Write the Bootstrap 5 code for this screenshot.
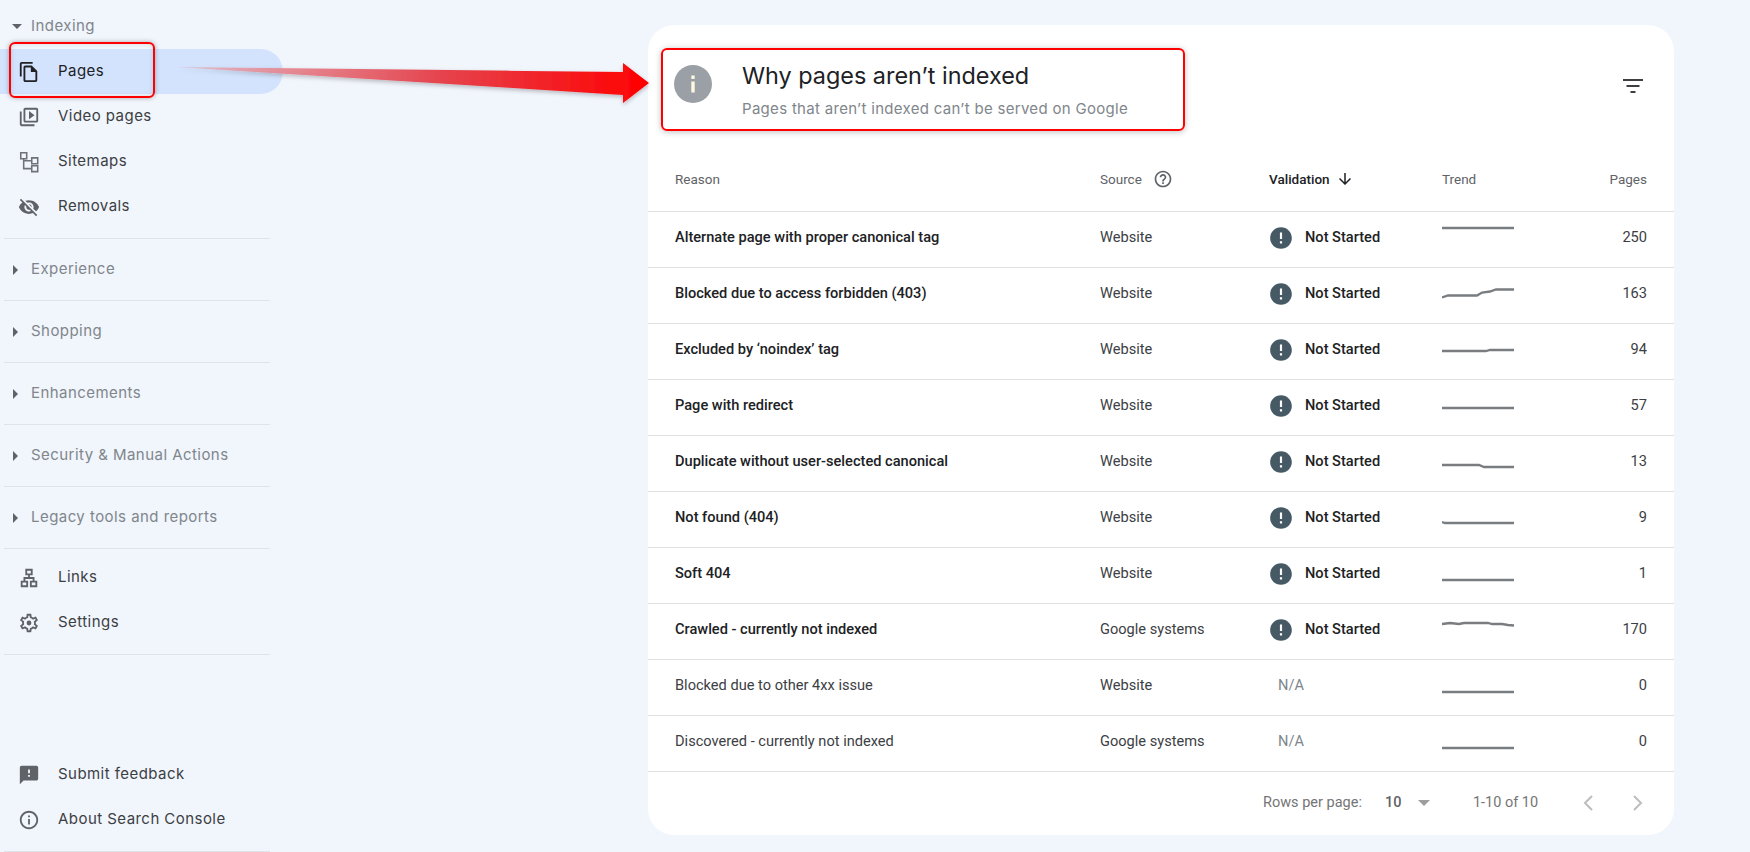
<!DOCTYPE html>
<html lang="en">
<head>
    <meta charset="UTF-8">
    <meta name="viewport" content="width=device-width, initial-scale=1.0">
    <title>Why pages aren't indexed</title>
    <link href="https://cdn.jsdelivr.net/npm/bootstrap@5.3.0/dist/css/bootstrap.min.css" rel="stylesheet">
    <style>
        body { background: #f1f5fc; font-family: Roboto, "Liberation Sans", sans-serif; height: 852px; overflow: hidden; }
        .side-nav { width: 283px; height: 852px; padding-top: 4px; font-family: Inter, Roboto, sans-serif; font-size: 15px; letter-spacing: .45px; color: #3c4043; }
        .side-item { height: 45px; padding-left: 18px; gap: 18px; position: relative; }
        .side-item svg { width: 22px; height: 22px; fill: #5f6368; flex: none; }
        .side-item svg.stroked { fill: none; stroke: #6f7377; stroke-width: 1.7; }
        .side-item.on { background: #d3e3fd; border-radius: 0 23px 23px 0; color: #202124; }
        .side-item.on svg { fill: #202124; }
        .side-item.on::after { content: ""; position: absolute; left: 9px; top: -7px; width: 146px; height: 56px; border: 2px solid #f00; border-radius: 6px; box-shadow: 0 0 5px rgba(0,0,0,.3), inset 0 0 5px rgba(0,0,0,.12); }
        .side-head { height: 45px; color: #80868b; padding-left: 12px; gap: 9px; }
        .side-sec { height: 61px; gap: 8px; }
        .caret-down { border-left: 5px solid transparent; border-right: 5px solid transparent; border-top: 5px solid #5f6368; }
        .caret-right { border-top: 5px solid transparent; border-bottom: 5px solid transparent; border-left: 5px solid #5f6368; margin-right: 5px; margin-left: 1px; }
        .side-rule { width: 266px; margin-left: 4px; border-bottom: 1px solid #e0e3e7; }
        .rule-top { margin-top: 9px; }
        .side-links { margin-top: 6px; }
        .page-main { padding: 25px 76px 17px 365px; }
        .report { width: 1026px; height: 810px; background: #fff; border-radius: 26px; }
        .report-top { padding: 23px 31px 0 13px; height: 122px; }
        .why-box { width: 524px; height: 83px; border: 2px solid #f00; border-radius: 6px; padding-left: 11px; box-shadow: 0 1px 6px rgba(0,0,0,.25); }
        .why-icon { width: 38px; height: 38px; flex: none; margin-right: 30px; margin-top: -12px; }
        .why-title { font-size: 23.400px; line-height: 30px; color: #202124; font-family: Inter, Roboto, sans-serif; font-weight: 400; margin: 0 0 8px; }
        .why-sub { font-size: 15px; letter-spacing: .3px; line-height: 20px; color: #80868b; font-family: Inter, Roboto, sans-serif; }
        .filter-icon { width: 20px; height: 14px; margin-top: 31px; }
        .why-table { table-layout: fixed; margin: 0; font-size: 14.600px; color: #3c4043; --bs-table-color: #3c4043; --bs-table-border-color: #e0e0e0; }
        .col-reason { width: 452px; }
        .col-source { width: 169px; }
        .col-valid { width: 173px; }
        .col-trend { width: 101px; }
        .col-pages { width: 131px; }
        .why-table th { height: 64px; font-size: 13.500px; font-weight: 400; color: #5f6368; padding: 0; vertical-align: middle; }
        .why-table td { height: 56px; padding: 0 0 3px; vertical-align: middle; }
        .why-table td.trend-cell { padding: 0; }
        .why-table .c1 { padding-left: 27px; }
        .why-table .cn { padding-right: 27px; text-align: right; }
        .why-table th.sorted { color: #202124; font-weight: 500; }
        .strong-row .c1, .status { font-weight: 500; color: #202124; }
        .status svg { width: 26px; height: 26px; fill: #455a64; margin-left: -1px; margin-right: 11px; flex: none; }
        .na { color: #80868b; padding-left: 9px; }
        .trend { width: 72px; height: 55px; display: block; fill: none; stroke: #7a7d80; stroke-width: 2.300; }
        .help-icon { width: 20px; height: 20px; fill: #5f6368; margin-left: 11px; }
        .sort-icon { width: 18px; height: 18px; fill: #202124; margin-left: 6px; }
        .pager { height: 62px; padding-left: 615px; font-size: 14.500px; color: #757575; }
        .pager-count { color: #5f6368; font-weight: 500; margin-left: 23px; width: 33px; }
        .pager-arrow { border-left: 6.500px solid transparent; border-right: 6.500px solid transparent; border-top: 6.500px solid #9e9e9e; }
        .pager-range { margin-left: 43px; width: 88px; }
        .pager-nav { width: 12px; height: 18px; fill: none; stroke: #bdbdbd; stroke-width: 2; margin-left: 21px; }
        .pager-nav + .pager-nav { margin-left: 38px; }
        .red-arrow { position: absolute; left: 0; top: 0; width: 700px; height: 130px; pointer-events: none; }
    </style>
</head>
<body>
    <svg class="d-none">
        <symbol id="err" viewBox="0 0 24 24"><path d="M12 2C6.48 2 2 6.48 2 12s4.48 10 10 10 10-4.48 10-10S17.52 2 12 2zm1 15h-2v-2h2v2zm0-4h-2V7h2v6z"/></symbol>
    </svg>

    <div class="d-flex">
        <nav class="side-nav d-flex flex-column flex-shrink-0">
            <div class="side-head d-flex align-items-center"><span class="caret-down"></span>Indexing</div>
            <div class="side-item on d-flex align-items-center">
                <svg viewBox="0 0 24 24"><path d="M16 1H4c-1.1 0-2 .9-2 2v14h2V3h12V1zm-1 4H8c-1.1 0-1.99.9-1.99 2L6 21c0 1.1.89 2 1.99 2H19c1.1 0 2-.9 2-2V11l-6-6zM8 21V7h6v5h5v9H8z"/></svg>Pages
            </div>
            <div class="side-item d-flex align-items-center">
                <svg viewBox="0 0 24 24"><path d="M4 6H2v14c0 1.1.9 2 2 2h14v-2H4V6zm16-4H8c-1.1 0-2 .9-2 2v12c0 1.1.9 2 2 2h12c1.1 0 2-.9 2-2V4c0-1.1-.9-2-2-2zm0 14H8V4h12v12zM12 5.500v9l6-4.500z"/></svg>Video pages
            </div>
            <div class="side-item d-flex align-items-center">
                <svg class="stroked" viewBox="0 0 24 24"><path d="M3 2h6.500v6.500H3zM15 7.500h6.500V14H15zM15 16h6.500v6.500H15zM6.200 8.500V19.200H15M6.200 10.700H15"/></svg>Sitemaps
            </div>
            <div class="side-item d-flex align-items-center">
                <svg viewBox="0 0 24 24"><path d="M12 7c2.76 0 5 2.24 5 5 0 .65-.13 1.26-.36 1.83l2.92 2.92c1.51-1.26 2.7-2.89 3.43-4.75-1.73-4.39-6-7.5-11-7.5-1.4 0-2.74.25-3.98.7l2.16 2.16C10.74 7.13 11.35 7 12 7zM2 4.27l2.28 2.28.46.46C3.08 8.3 1.78 10.02 1 12c1.73 4.39 6 7.5 11 7.5 1.55 0 3.03-.3 4.38-.84l.42.42L19.73 22 21 20.73 3.27 3 2 4.27zM7.53 9.8l1.55 1.55c-.05.21-.08.43-.08.65 0 1.66 1.34 3 3 3 .22 0 .44-.03.65-.08l1.55 1.55c-.67.33-1.41.53-2.2.53-2.76 0-5-2.24-5-5 0-.79.2-1.53.53-2.2zm4.31-.78l3.15 3.15.02-.16c0-1.66-1.34-3-3-3l-.17.01z"/></svg>Removals
            </div>
            <div class="side-rule rule-top"></div>
            <div class="side-head side-sec d-flex align-items-center"><span class="caret-right"></span>Experience</div>
            <div class="side-rule"></div>
            <div class="side-head side-sec d-flex align-items-center"><span class="caret-right"></span>Shopping</div>
            <div class="side-rule"></div>
            <div class="side-head side-sec d-flex align-items-center"><span class="caret-right"></span>Enhancements</div>
            <div class="side-rule"></div>
            <div class="side-head side-sec d-flex align-items-center"><span class="caret-right"></span>Security &amp; Manual Actions</div>
            <div class="side-rule"></div>
            <div class="side-head side-sec d-flex align-items-center"><span class="caret-right"></span>Legacy tools and reports</div>
            <div class="side-rule"></div>
            <div class="side-item side-links d-flex align-items-center">
                <svg viewBox="0 0 24 24"><path d="M13 22h8v-7h-3v-4h-5V9h3V2H8v7h3v2H6v4H3v7h8v-7H8v-2h8v2h-3v7zM10 7V4h4v3h-4zM5 20v-3h4v3H5zm10 0v-3h4v3h-4z"/></svg>Links
            </div>
            <div class="side-item d-flex align-items-center">
                <svg viewBox="0 0 24 24"><path d="M19.43 12.98c.04-.32.07-.64.07-.98 0-.34-.03-.66-.07-.98l2.11-1.65c.19-.15.24-.42.12-.64l-2-3.46c-.09-.16-.26-.25-.44-.25-.06 0-.12.01-.17.03l-2.49 1c-.52-.4-1.08-.73-1.69-.98l-.38-2.65C14.46 2.18 14.25 2 14 2h-4c-.25 0-.46.18-.49.42l-.38 2.65c-.61.25-1.17.59-1.69.98l-2.49-1c-.06-.02-.12-.03-.18-.03-.17 0-.34.09-.43.25l-2 3.46c-.13.22-.07.49.12.64l2.11 1.65c-.04.32-.07.65-.07.98 0 .33.03.66.07.98l-2.11 1.65c-.19.15-.24.42-.12.64l2 3.46c.09.16.26.25.44.25.06 0 .12-.01.17-.03l2.49-1c.52.4 1.08.73 1.69.98l.38 2.65c.03.24.24.42.49.42h4c.25 0 .46-.18.49-.42l.38-2.65c.61-.25 1.17-.59 1.69-.98l2.49 1c.06.02.12.03.18.03.17 0 .34-.09.43-.25l2-3.46c.12-.22.07-.49-.12-.64l-2.11-1.65zm-1.98-1.71c.04.31.05.52.05.73 0 .21-.02.43-.05.73l-.14 1.13.89.7 1.08.84-.7 1.21-1.27-.51-1.04-.42-.9.68c-.43.32-.84.56-1.25.73l-1.06.43-.16 1.13-.2 1.35h-1.4l-.19-1.35-.16-1.13-1.06-.43c-.43-.18-.83-.41-1.23-.71l-.91-.7-1.06.43-1.27.51-.7-1.21 1.08-.84.89-.7-.14-1.13c-.03-.31-.05-.54-.05-.74s.02-.43.05-.73l.14-1.13-.89-.7-1.08-.84.7-1.21 1.27.51 1.04.42.9-.68c.43-.32.84-.56 1.25-.73l1.06-.43.16-1.13.2-1.35h1.39l.19 1.35.16 1.13 1.06.43c.43.18.83.41 1.23.71l.91.7 1.06-.43 1.27-.51.7 1.21-1.07.85-.89.7.14 1.13z"/><circle cx="12" cy="12" r="2.600"/></svg>Settings
            </div>
            <div class="side-rule rule-top"></div>
            <div class="side-item d-flex align-items-center mt-auto">
                <svg viewBox="0 0 24 24"><path d="M20 2H4c-1.1 0-1.99.9-1.99 2L2 22l4-4h14c1.1 0 2-.9 2-2V4c0-1.1-.9-2-2-2zm-7 12h-2v-2h2v2zm0-4h-2V6h2v4z"/></svg>Submit feedback
            </div>
            <div class="side-item d-flex align-items-center">
                <svg viewBox="0 0 24 24"><path d="M11 7h2v2h-2zm0 4h2v6h-2zm1-9C6.48 2 2 6.48 2 12s4.48 10 10 10 10-4.48 10-10S17.52 2 12 2zm0 18c-4.41 0-8-3.59-8-8s3.59-8 8-8 8 3.59 8 8-3.59 8-8 8z"/></svg>About Search Console
            </div>
            <div class="side-rule rule-top"></div>
        </nav>

        <main class="page-main">
            <section class="report">
                <div class="report-top d-flex justify-content-between align-items-start">
                    <div class="why-box d-flex align-items-center">
                        <svg class="why-icon" viewBox="0 0 38 38"><circle cx="19" cy="19" r="19" fill="#9aa0a6"/><rect x="17.300" y="16.500" width="3.400" height="11" fill="#fff8e1"/><rect x="17.300" y="10.500" width="3.400" height="3.400" fill="#fff8e1"/></svg>
                        <div>
                            <h1 class="why-title">Why pages aren’t indexed</h1>
                            <div class="why-sub">Pages that aren’t indexed can’t be served on Google</div>
                        </div>
                    </div>
                    <svg class="filter-icon" viewBox="0 0 20 14"><path d="M0 0h20v2H0zM3.500 6h13v2h-13zM7.500 12h5v2h-5z" fill="#3c4043"/></svg>
                </div>

                <table class="table why-table">
                    <colgroup><col class="col-reason"><col class="col-source"><col class="col-valid"><col class="col-trend"><col class="col-pages"></colgroup>
                    <thead>
                        <tr>
                            <th class="c1">Reason</th>
                            <th><span class="d-inline-flex align-items-center">Source<svg class="help-icon" viewBox="0 0 24 24"><path d="M11 18h2v-2h-2v2zm1-16C6.48 2 2 6.48 2 12s4.48 10 10 10 10-4.48 10-10S17.52 2 12 2zm0 18c-4.41 0-8-3.59-8-8s3.59-8 8-8 8 3.59 8 8-3.59 8-8 8zm0-14c-2.210 0-4 1.790-4 4h2c0-1.100.9-2 2-2s2 .9 2 2c0 2-3 1.750-3 5h2c0-2.250 3-2.500 3-5 0-2.210-1.790-4-4-4z"/></svg></span></th>
                            <th class="sorted"><span class="d-inline-flex align-items-center">Validation<svg class="sort-icon" viewBox="0 0 24 24"><path d="M20 12l-1.410-1.410L13 16.170V4h-2v12.170l-5.580-5.600L4 12l8 8 8-8z"/></svg></span></th>
                            <th>Trend</th>
                            <th class="cn">Pages</th>
                        </tr>
                    </thead>
                    <tbody>
                        <tr class="strong-row"><td class="c1">Alternate page with proper canonical tag</td><td>Website</td><td><div class="status d-flex align-items-center"><svg><use href="#err"/></svg>Not Started</div></td><td class="trend-cell"><svg class="trend" viewBox="0 0 72 55"><path d="M0 16H72"/></svg></td><td class="cn">250</td></tr>
                        <tr class="strong-row"><td class="c1">Blocked due to access forbidden (403)</td><td>Website</td><td><div class="status d-flex align-items-center"><svg><use href="#err"/></svg>Not Started</div></td><td class="trend-cell"><svg class="trend" viewBox="0 0 72 55"><path d="M0 29.500L6 27.500H35L40 24.500 48 23.500 54 21.500H72"/></svg></td><td class="cn">163</td></tr>
                        <tr class="strong-row"><td class="c1">Excluded by ‘noindex’ tag</td><td>Website</td><td><div class="status d-flex align-items-center"><svg><use href="#err"/></svg>Not Started</div></td><td class="trend-cell"><svg class="trend" viewBox="0 0 72 55"><path d="M0 27H44L48 26H72"/></svg></td><td class="cn">94</td></tr>
                        <tr class="strong-row"><td class="c1">Page with redirect</td><td>Website</td><td><div class="status d-flex align-items-center"><svg><use href="#err"/></svg>Not Started</div></td><td class="trend-cell"><svg class="trend" viewBox="0 0 72 55"><path d="M0 28H72"/></svg></td><td class="cn">57</td></tr>
                        <tr class="strong-row"><td class="c1">Duplicate without user-selected canonical</td><td>Website</td><td><div class="status d-flex align-items-center"><svg><use href="#err"/></svg>Not Started</div></td><td class="trend-cell"><svg class="trend" viewBox="0 0 72 55"><path d="M0 29H37L42 31H72"/></svg></td><td class="cn">13</td></tr>
                        <tr class="strong-row"><td class="c1">Not found (404)</td><td>Website</td><td><div class="status d-flex align-items-center"><svg><use href="#err"/></svg>Not Started</div></td><td class="trend-cell"><svg class="trend" viewBox="0 0 72 55"><path d="M0 30L3 31H72"/></svg></td><td class="cn">9</td></tr>
                        <tr class="strong-row"><td class="c1">Soft 404</td><td>Website</td><td><div class="status d-flex align-items-center"><svg><use href="#err"/></svg>Not Started</div></td><td class="trend-cell"><svg class="trend" viewBox="0 0 72 55"><path d="M0 32H72"/></svg></td><td class="cn">1</td></tr>
                        <tr class="strong-row"><td class="c1">Crawled - currently not indexed</td><td>Google systems</td><td><div class="status d-flex align-items-center"><svg><use href="#err"/></svg>Not Started</div></td><td class="trend-cell"><svg class="trend" viewBox="0 0 72 55"><path d="M0 20L8 19 17 20 22 19H46L50 20H60L66 21 72 21.500"/></svg></td><td class="cn">170</td></tr>
                        <tr><td class="c1">Blocked due to other 4xx issue</td><td>Website</td><td><span class="na">N/A</span></td><td class="trend-cell"><svg class="trend" viewBox="0 0 72 55"><path d="M0 32H72"/></svg></td><td class="cn">0</td></tr>
                        <tr><td class="c1">Discovered - currently not indexed</td><td>Google systems</td><td><span class="na">N/A</span></td><td class="trend-cell"><svg class="trend" viewBox="0 0 72 55"><path d="M0 32H72"/></svg></td><td class="cn">0</td></tr>
                    </tbody>
                </table>

                <div class="pager d-flex align-items-center">
                    <span class="text-nowrap">Rows per page:</span>
                    <span class="pager-count">10</span>
                    <span class="pager-arrow"></span>
                    <span class="pager-range text-nowrap">1-10 of 10</span>
                    <svg class="pager-nav" viewBox="0 0 12 18"><path d="M10 2L3 9l7 7"/></svg>
                    <svg class="pager-nav" viewBox="0 0 12 18"><path d="M2 2l7 7-7 7"/></svg>
                </div>
            </section>
        </main>
    </div>

    <svg class="red-arrow" viewBox="0 0 700 130">
        <defs>
            <linearGradient id="fade" x1="176" x2="649" y1="0" y2="0" gradientUnits="userSpaceOnUse">
                <stop offset="0" stop-color="#e88" stop-opacity=".3"/>
                <stop offset=".2" stop-color="#e58a94" stop-opacity=".9"/>
                <stop offset=".55" stop-color="#e5454f"/>
                <stop offset="1" stop-color="#f00"/>
            </linearGradient>
            <filter id="soft" x="-5%" y="-30%" width="110%" height="170%"><feDropShadow dx="0" dy="2" stdDeviation="2" flood-color="#000" flood-opacity=".25"/></filter>
        </defs>
        <path d="M176 67L623 72V63L649 83 623 103V95Z" fill="url(#fade)" filter="url(#soft)"/>
    </svg>
</body>
</html>
